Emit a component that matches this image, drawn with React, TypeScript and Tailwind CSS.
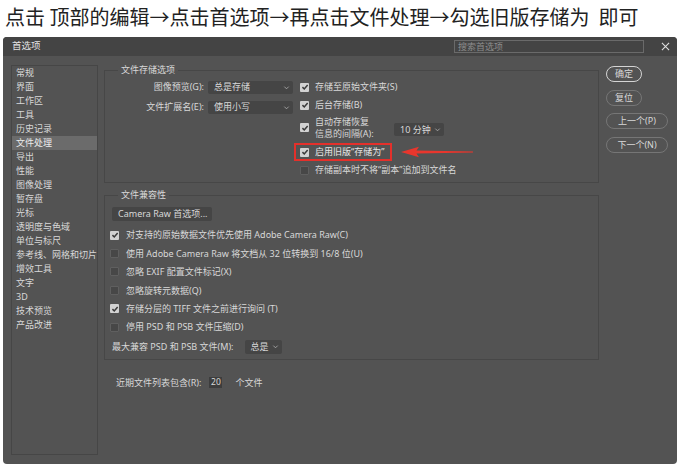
import { ReactNode } from 'react';

const ui = "font-['Noto_Sans','Noto_Sans_CJK_SC',sans-serif]";

const sideItems = [
  '常规', '界面', '工作区', '工具', '历史记录', '文件处理', '导出', '性能', '图像处理', '暂存盘',
  '光标', '透明度与色域', '单位与标尺', '参考线、网格和切片', '增效工具', '文字', '3D', '技术预览', '产品改进',
];

function Check({ on }: { on?: boolean }) {
  if (!on) return <span className="h-[9px] w-[9px] shrink-0 rounded-[1px] border border-[#5f5f5f] bg-[#474747]" />;
  return (
    <span className="flex h-[9px] w-[9px] shrink-0 items-center justify-center rounded-[1px] bg-[#d2d2d2]">
      <svg viewBox="0 0 10 10" className="h-[8px] w-[8px]">
        <path d="M1.8 5.2 4.1 7.5 8.3 2.6" fill="none" stroke="#3a3a3a" strokeWidth="1.9" />
      </svg>
    </span>
  );
}

function Chevron() {
  return (
    <svg viewBox="0 0 8 8" className="h-[7px] w-[7px] shrink-0">
      <path d="M1.5 3 4 5.5 6.5 3" fill="none" stroke="#b5b5b5" strokeWidth="0.9" />
    </svg>
  );
}

function Select({ value, className }: { value: string; className: string }) {
  return (
    <div className={`flex items-center justify-between rounded-[2px] bg-[#454545] pl-[6px] pr-[3px] ${className}`}>
      <span>{value}</span>
      <Chevron />
    </div>
  );
}

function Row({ on, children }: { on?: boolean; children: ReactNode }) {
  return (
    <div className="flex h-[18.4px] items-center gap-[7px] pl-[4px]">
      <Check on={on} />
      <span>{children}</span>
    </div>
  );
}

function Pill({ children, primary, className }: { children: ReactNode; primary?: boolean; className: string }) {
  return (
    <div
      className={`flex h-[16px] items-center justify-center rounded-full ${
        primary ? 'border-[1.5px] border-[#d4d4d4]' : 'border border-[#767676]'
      } ${className}`}
    >
      {children}
    </div>
  );
}

export default function App() {
  return (
    <div className={`h-[472px] w-[690px] bg-white ${ui}`}>
      <div className="h-[37px] pl-[5px] pt-[3px] font-['Noto_Sans_CJK_SC',sans-serif] text-[20px] leading-[28px] text-[#222]">
        点击 顶部的编辑→点击首选项→再点击文件处理→勾选旧版存储为&nbsp; 即可
      </div>

      <div className="ml-[3px] flex h-[427px] w-[674px] flex-col overflow-hidden rounded-[4px] bg-[#535353] text-[9px] text-[#d8d8d8]">
        {/* title bar */}
        <div className="flex h-[19px] shrink-0 items-center bg-[#444444] pl-[9px] pr-[7px]">
          <span className="text-[9.5px] text-[#e2e2e2]">首选项</span>
          <div className="ml-auto flex h-[13px] w-[190px] items-center border border-[#6a6a6a] pl-[3px] text-[#8d8d8d]">
            搜索首选项
          </div>
          <svg viewBox="0 0 10 10" className="ml-[17px] h-[9px] w-[9px]">
            <path d="M1 1 9 9M9 1 1 9" stroke="#e0e0e0" strokeWidth="1.2" />
          </svg>
        </div>

        {/* body */}
        <div className="flex flex-1 pb-[9px] pl-[8px] pr-[9px] pt-[8px]">
          <div className="mt-[1px] w-[87px] shrink-0 border border-[#464646]">
            {sideItems.map(item => (
              <div
                key={item}
                className={`h-[14px] pl-[4px] leading-[14px] ${item === '文件处理' ? 'bg-[#6b6b6b] text-[#ececec]' : ''}`}
              >
                {item}
              </div>
            ))}
          </div>

          <div className="ml-[6px] w-[495px] shrink-0">
            <fieldset className="h-[119px] border border-[#474747]">
              <legend className="ml-[13px] px-[3px] leading-[12px]">文件存储选项</legend>
              <div className="flex pt-[2px]">
                <div className="flex w-[189px] flex-col gap-[2px] pr-[1px]">
                  <div className="flex h-[18px] items-center justify-end gap-[4px]">
                    <span>图像预览(G):</span>
                    <Select value="总是存储" className="h-[13px] w-[85px]" />
                  </div>
                  <div className="flex h-[18px] items-center justify-end gap-[4px]">
                    <span>文件扩展名(E):</span>
                    <Select value="使用小写" className="h-[13px] w-[85px]" />
                  </div>
                </div>

                <div className="flex flex-1 flex-col">
                  <div className="flex h-[18px] items-center gap-[6px] pl-[6px]">
                    <Check on />
                    <span>存储至原始文件夹(S)</span>
                  </div>
                  <div className="flex h-[18px] items-center gap-[6px] pl-[6px]">
                    <Check on />
                    <span>后台存储(B)</span>
                  </div>
                  <div className="flex h-[27px] items-center pl-[6px]">
                    <Check on />
                    <p className="ml-[6px] w-[79px] leading-[11.5px]">
                      自动存储恢复
                      <br />
                      信息的间隔(A):
                    </p>
                    <Select value="10 分钟" className="mt-[4px] h-[13px] w-[50px]" />
                  </div>
                  <div className="relative mt-[2px]">
                    <div className="flex h-[18px] w-[98px] items-center gap-[6px] border-2 border-[#e4302b] pl-[4px]">
                      <Check on />
                      <span className="text-[#e6e6e6]">启用旧版“存储为”</span>
                    </div>
                    <svg viewBox="0 0 74 12" className="absolute left-[106px] top-[3px] h-[12px] w-[74px]">
                      <path d="M1 6 19 0.8 16.5 4.4 73 5.5 73 6.5 16.5 7.6 19 11.2Z" fill="#e8362d" />
                    </svg>
                  </div>
                  <div className="flex h-[18px] items-center gap-[6px] pl-[6px]">
                    <Check />
                    <span>存储副本时不将“副本”追加到文件名</span>
                  </div>
                </div>
              </div>
            </fieldset>

            <fieldset className="mt-[6px] border border-[#474747] pb-[2px]">
              <legend className="ml-[13px] px-[3px] leading-[12px]">文件兼容性</legend>
              <div className="pl-[1px]">
                <div className="ml-[6px] mt-[6px] flex h-[14px] w-[100px] items-center rounded-[2px] bg-[#454545] pl-[6px]">
                  Camera Raw 首选项...
                </div>
                <div className="mt-[5px]">
                  <Row on>对支持的原始数据文件优先使用 Adobe Camera Raw(C)</Row>
                  <Row>使用 Adobe Camera Raw 将文档从 32 位转换到 16/8 位(U)</Row>
                  <Row>忽略 EXIF 配置文件标记(X)</Row>
                  <Row>忽略旋转元数据(Q)</Row>
                  <Row on>存储分层的 TIFF 文件之前进行询问 (T)</Row>
                  <Row>停用 PSD 和 PSB 文件压缩(D)</Row>
                  <div className="flex h-[21px] items-center gap-[11px] pl-[6px]">
                    <span>最大兼容 PSD 和 PSB 文件(M):</span>
                    <Select value="总是" className="h-[14px] w-[37px]" />
                  </div>
                </div>
              </div>
            </fieldset>

            <div className="mt-[15px] flex h-[14px] items-center pl-[12px]">
              <span>近期文件列表包含(R):</span>
              <span className="ml-[8px] flex h-[11px] w-[13px] items-center justify-center bg-[#3d3d3d] text-[8.5px]">20</span>
              <span className="ml-[13px]">个文件</span>
            </div>
          </div>

          <div className="ml-[7px] flex w-[62px] shrink-0 flex-col gap-[7.6px] pt-[2px]">
            <Pill primary className="w-[36px]">确定</Pill>
            <Pill className="w-[36px]">复位</Pill>
            <Pill className="w-[62px]">上一个(P)</Pill>
            <Pill className="w-[62px]">下一个(N)</Pill>
          </div>
        </div>
      </div>
    </div>
  );
}
